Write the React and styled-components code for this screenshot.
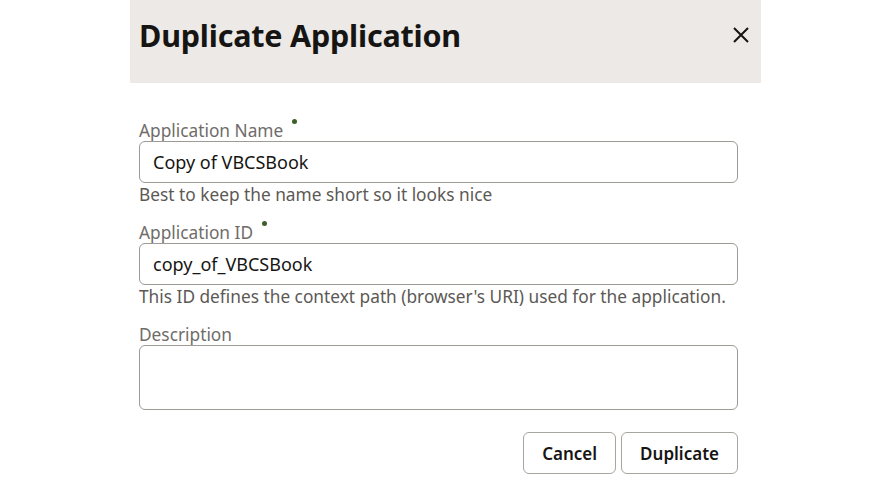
import React from 'react'
import styled, { createGlobalStyle } from 'styled-components'

const GlobalStyle = createGlobalStyle`
  html, body {
    margin: 0;
    padding: 0;
    background: #ffffff;
    font-family: "Noto Sans", "Liberation Sans", sans-serif;
  }
`

const Page = styled.div`
  width: 890px;
  height: 480px;
  overflow: hidden;
  display: flex;
  justify-content: center;
`

const Dialog = styled.div`
  width: 631px;
  margin-left: 1px;
  display: flex;
  flex-direction: column;
`

const Header = styled.div`
  height: 83px;
  background: #ece9e6;
  display: flex;
  align-items: flex-start;
  justify-content: space-between;
  padding: 14px 9px 0 9px;
  box-sizing: border-box;
`

const Title = styled.h1`
  margin: 0;
  font-size: 30.5px;
  font-weight: 700;
  color: #161513;
  letter-spacing: -0.2px;
`

const CloseButton = styled.button`
  border: none;
  background: transparent;
  padding: 0;
  margin-top: 10px;
  width: 22px;
  height: 22px;
  display: flex;
  align-items: center;
  justify-content: center;
  cursor: pointer;
`

const Body = styled.div`
  padding: 37px 23px 0 9px;
  display: flex;
  flex-direction: column;
`

const Field = styled.div`
  display: flex;
  flex-direction: column;
  margin-top: ${p => p.$top || 0}px;
`

const Label = styled.label`
  font-size: 17.3px;
  color: #6f6c69;
  line-height: 21px;
  display: flex;
  align-items: flex-start;
`

const RequiredDot = styled.span`
  width: 5px;
  height: 5px;
  border-radius: 50%;
  background: #3c6027;
  margin: -1px 0 0 9px;
`

const Input = styled.div`
  height: 42px;
  border: 1px solid #9e9a96;
  border-radius: 6px;
  box-sizing: border-box;
  padding: 0 13px;
  display: flex;
  align-items: center;
  font-size: 18px;
  color: #161513;
`

const TextArea = styled.div`
  height: 65px;
  border: 1px solid #9e9a96;
  border-radius: 6px;
  box-sizing: border-box;
`

const Help = styled.div`
  font-size: 17.3px;
  line-height: 24px;
  color: #5c5955;
`

const Footer = styled.div`
  display: flex;
  justify-content: flex-end;
  gap: 5px;
  margin-top: 22px;
`

const Button = styled.button`
  height: 42px;
  padding: 0 ${p => p.$pad}px;
  border: 1px solid #a8a4a0;
  border-radius: 6px;
  background: #ffffff;
  font-family: inherit;
  font-size: 17px;
  font-weight: 600;
  color: #161513;
`

export default function App() {
  return (
    <>
      <GlobalStyle />
      <Page>
        <Dialog>
          <Header>
            <Title>Duplicate Application</Title>
            <CloseButton aria-label="Close">
              <svg width="18" height="18" viewBox="0 0 18 18">
                <path d="M2 2 L16 16 M16 2 L2 16" stroke="#161513" strokeWidth="2" />
              </svg>
            </CloseButton>
          </Header>
          <Body>
            <Field>
              <Label>Application Name<RequiredDot /></Label>
              <Input>Copy of VBCSBook</Input>
              <Help>Best to keep the name short so it looks nice</Help>
            </Field>
            <Field $top={15}>
              <Label>Application ID<RequiredDot /></Label>
              <Input>copy_of_VBCSBook</Input>
              <Help>This ID defines the context path (browser's URI) used for the application.</Help>
            </Field>
            <Field $top={15}>
              <Label>Description</Label>
              <TextArea />
            </Field>
            <Footer>
              <Button $pad={18}>Cancel</Button>
              <Button $pad={18}>Duplicate</Button>
            </Footer>
          </Body>
        </Dialog>
      </Page>
    </>
  )
}
